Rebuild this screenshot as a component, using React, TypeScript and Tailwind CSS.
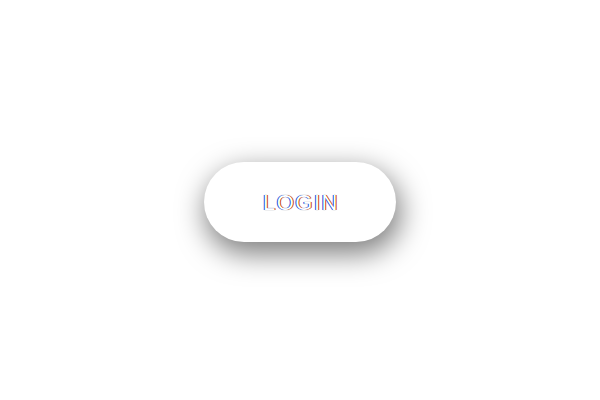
export default function App() {
  return (
    <div className="flex h-[400px] w-[600px] items-center justify-center bg-white">
      <button
        type="button"
        className="mt-[4px] flex h-[80px] w-[192px] items-center justify-center rounded-full bg-white pl-[2px] text-[22px] text-white font-['Liberation_Sans',Arial,sans-serif] tracking-[1.5px] shadow-[3px_10px_28px_2px_rgba(0,0,0,0.5)] [text-shadow:-1px_0_#1d4ed8,1px_0_#c2410c,0_0_1px_#4b5563]"
      >
        LOGIN
      </button>
    </div>
  );
}
